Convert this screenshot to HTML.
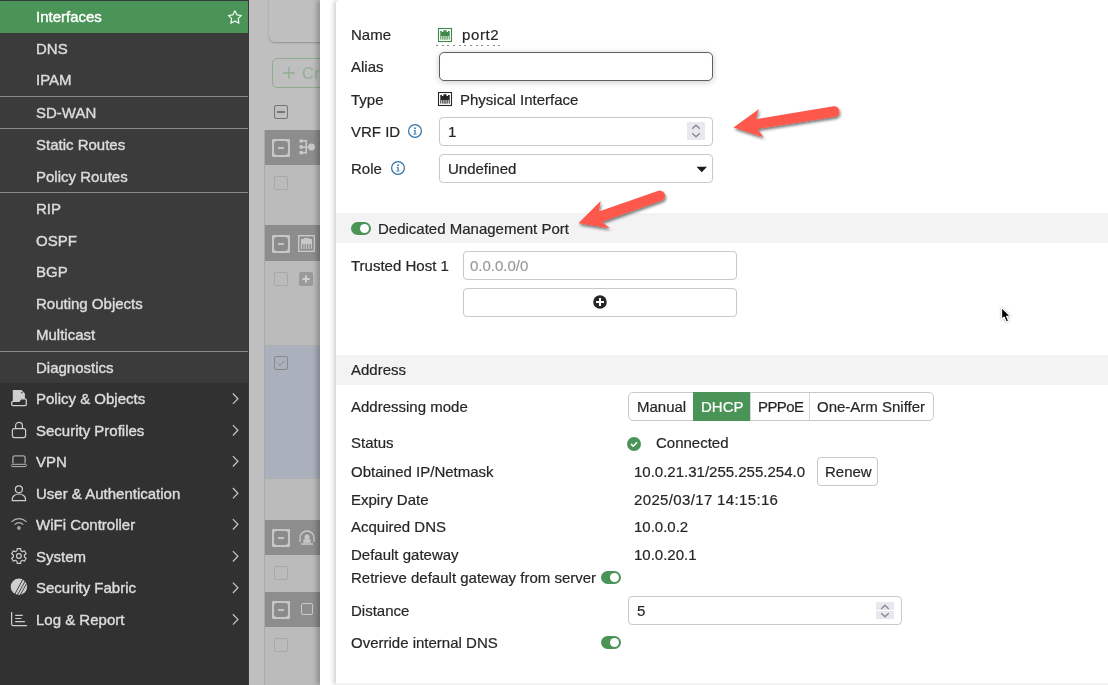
<!DOCTYPE html>
<html><head><meta charset="utf-8">
<style>
*{box-sizing:border-box}
html,body{margin:0;padding:0}
body{width:1108px;height:685px;overflow:hidden;position:relative;background:#bfbfbf;font-family:"Liberation Sans",sans-serif;font-size:15px;color:#262626}
.a{position:absolute}
.t{position:absolute;white-space:nowrap;line-height:16px;will-change:transform;-webkit-text-stroke:0.2px currentColor}
.si,.mi{-webkit-text-stroke:0.4px currentColor}
#sb{left:0;top:0;width:248px;height:685px;background:#313131}
.si{color:#dcdcdc;left:36px}
.sep{position:absolute;left:0;width:248px;height:1px;background:#8a8a8a}
.mi{color:#dcdcdc;left:36px}
.chev{position:absolute;left:229.5px;width:7px;height:7px;border-right:1.3px solid #bbb;border-top:1.3px solid #bbb;transform:rotate(45deg)}
.pl{color:#262626}
.inp{position:absolute;background:#fff;border:1px solid #c8c8c8;border-radius:4px}
.tog{position:absolute;width:20px;height:13px;border-radius:7px;background:#4a9458}
.tog:after{content:"";position:absolute;right:2px;top:2px;width:9px;height:9px;border-radius:50%;background:#fff}
.band{position:absolute;left:336px;width:772px;height:30px;background:#f3f3f3}
</style></head><body>

<!-- sidebar -->
<div id="sb" class="a"></div>
<div class="a" style="left:0;top:1px;width:248px;height:382px;background:#3b3b3b"></div>
<div class="a" style="left:2px;top:0;width:246px;height:1px;background:#383838"></div>
<div class="a" style="left:0;top:1px;width:248px;height:32px;background:#4a9458"></div>
<div class="a" style="left:248px;top:0;width:1px;height:685px;background:#3a3a3a"></div>
<div class="t si" style="top:9px;color:#fff">Interfaces</div>
<svg class="a" style="left:0;top:0" width="248" height="33"><path d="M234.90 10.70 L236.90 14.85 L241.46 15.47 L238.13 18.65 L238.96 23.18 L234.90 21.00 L230.84 23.18 L231.67 18.65 L228.34 15.47 L232.90 14.85 Z" fill="none" stroke="#fff" stroke-width="1.1" stroke-linejoin="round"/></svg>
<div class="t si" style="top:41px">DNS</div>
<div class="t si" style="top:72px">IPAM</div>
<div class="sep" style="top:96px"></div>
<div class="t si" style="top:105px">SD-WAN</div>
<div class="sep" style="top:128px"></div>
<div class="t si" style="top:137px">Static Routes</div>
<div class="t si" style="top:169px">Policy Routes</div>
<div class="sep" style="top:192px"></div>
<div class="t si" style="top:201px">RIP</div>
<div class="t si" style="top:233px">OSPF</div>
<div class="t si" style="top:264px">BGP</div>
<div class="t si" style="top:296px">Routing Objects</div>
<div class="t si" style="top:327px">Multicast</div>
<div class="sep" style="top:351px"></div>
<div class="t si" style="top:360px">Diagnostics</div>

<div class="t mi" style="top:391px">Policy &amp; Objects</div>
<div class="t mi" style="top:423px">Security Profiles</div>
<div class="t mi" style="top:454px">VPN</div>
<div class="t mi" style="top:486px">User &amp; Authentication</div>
<div class="t mi" style="top:517px">WiFi Controller</div>
<div class="t mi" style="top:549px">System</div>
<div class="t mi" style="top:580px">Security Fabric</div>
<div class="t mi" style="top:612px">Log &amp; Report</div>


<svg class="a" style="left:0;top:380px" width="40" height="260" viewBox="0 380 40 260" fill="none" stroke="#cfcfcf" stroke-width="1.2">
 <!-- policy -->
 <path d="M12.8 389.9 H21.5 L24.9 393.5 V398.8 H20.6 L19.1 401.3 H12.8 Z" fill="#cfcfcf" stroke="none"/>
 <circle cx="21.9" cy="392.6" r="0.9" fill="#555" stroke="none"/>
 <path d="M11.7 402.6 Q11.7 401.3 13 401.3 H19.1 L20.6 398.8 H24.9 Q26.3 398.8 26.3 400.3 V404.3 Q26.3 405.6 25 405.6 H13 Q11.7 405.6 11.7 404.3 Z" stroke-width="1.3"/>
 <!-- lock -->
 <path d="M15.6 428.4 V425.8 A3.4 3.4 0 0 1 22.4 425.8 V428.4"/>
 <rect x="12.4" y="428.6" width="13.2" height="9" rx="2"/>
 <!-- laptop -->
 <path d="M12.9 463.4 V457.8 A2 2 0 0 1 14.9 455.8 H23.1 A2 2 0 0 1 25.1 457.8 V463.4" stroke="#a8a8a8" stroke-width="1.3"/>
 <rect x="11.5" y="464.3" width="15" height="2.3" rx="1.15" stroke="#b8b8b8" stroke-width="1"/>
 <!-- user -->
 <circle cx="18.9" cy="489.3" r="3.5"/>
 <path d="M12.3 500.6 V499 A6.6 5 0 0 1 25.5 499 V500.6 Z"/>
 <!-- wifi -->
 <path d="M11.4 521.9 Q18.9 515.3 26.6 521.9" stroke="#b4b4b4"/>
 <path d="M14.6 524.6 Q18.9 520.5 23.3 524.6" stroke="#b4b4b4"/>
 <circle cx="18.9" cy="528" r="1.9" fill="#a0a0a0" stroke="none"/>
 <!-- gear -->
 <path d="M16.98 550.74 L17.19 548.59 L20.61 548.59 L20.82 550.74 L22.50 551.71 L24.46 550.82 L26.17 553.78 L24.41 555.03 L24.41 556.97 L26.17 558.22 L24.46 561.18 L22.50 560.29 L20.82 561.26 L20.61 563.41 L17.19 563.41 L16.98 561.26 L15.30 560.29 L13.34 561.18 L11.63 558.22 L13.39 556.97 L13.39 555.03 L11.63 553.78 L13.34 550.82 L15.30 551.71 Z" stroke-linejoin="round"/>
 <circle cx="18.9" cy="556" r="2.4"/>
 <!-- fabric -->
 <circle cx="18.9" cy="586.7" r="8.2" fill="#cfcfcf" stroke="none"/>
 <path d="M14.4 595 L23 579 M17.2 595.5 L25.2 581 M20 595.5 L26.6 583.5" stroke="#313131" stroke-width="0.9"/>
 <!-- log -->
 <path d="M11.6 612 V624 Q11.6 625.6 13.2 625.6 H27"/>
 <path d="M15.2 615.4 H22.8 M15.2 618.5 H21.4 M15.2 621.6 H24.9"/>
</svg>
<svg class="a" style="left:0;top:0" width="248" height="685"><path d="M232.9 393.5 L237.9 398.7 L232.9 403.9 M232.9 425.1 L237.9 430.3 L232.9 435.5 M232.9 456.1 L237.9 461.3 L232.9 466.5 M232.9 488.0 L237.9 493.2 L232.9 498.4 M232.9 519.1 L237.9 524.3 L232.9 529.5 M232.9 551.1 L237.9 556.3 L232.9 561.5 M232.9 582.6 L237.9 587.8 L232.9 593.0 M232.9 614.2 L237.9 619.4 L232.9 624.6" fill="none" stroke="#c4c4c4" stroke-width="1.25"/></svg>
<!-- background page (overlayed) -->
<div class="a" style="left:269px;top:-6px;width:70px;height:48px;border-radius:6px;background:#bfbfbf;box-shadow:0 1px 2px rgba(0,0,0,.25)"></div>


<!-- background page -->
<div class="a" style="left:272px;top:58px;width:60px;height:30px;border:1.2px solid #8fae8f;border-radius:5px"></div>
<svg class="a" style="left:282px;top:66px" width="14" height="14"><path d="M7 1 V13 M1 7 H13" stroke="#8fae8f" stroke-width="1.3"/></svg>
<div class="t" style="left:302px;top:65px;font-size:16.5px;color:#97b097">Cr</div>
<div class="a" style="left:274px;top:105px;width:14px;height:14px;border:1.3px solid #767676;border-radius:2px"></div>
<div class="a" style="left:277px;top:111px;width:8px;height:2px;background:#767676"></div>
<div class="a" style="left:264px;top:130px;width:60px;height:555px;border-left:1px solid #a9a9a9;background:#bbbbbb"></div>
<div class="a" style="left:265px;top:130px;width:60px;height:35px;background:#8d8d8d"></div>
<div class="a" style="left:265px;top:225px;width:60px;height:36px;background:#8d8d8d"></div>
<div class="a" style="left:265px;top:346px;width:60px;height:132px;background:#aab0bc"></div>
<div class="a" style="left:265px;top:478px;width:60px;height:1px;background:#b0b0b0"></div>
<div class="a" style="left:265px;top:520px;width:60px;height:35px;background:#8d8d8d"></div>
<div class="a" style="left:265px;top:592px;width:60px;height:35px;background:#8d8d8d"></div>
<div class="a" style="left:265px;top:345px;width:60px;height:1px;background:#b0b0b0"></div>
<!-- header minus boxes -->
<div class="a" style="left:272px;top:139px;width:18px;height:18px;border:2px solid #c6c6c6;background:#c6c6c6;border-radius:1px"><div class="a" style="left:0;top:0;width:14px;height:14px;background:#8b8b8b;border-radius:3px"></div></div>
<div class="a" style="left:278px;top:147px;width:6px;height:1.5px;background:#c4c4c4"></div>
<div class="a" style="left:272px;top:235px;width:18px;height:18px;border:2px solid #c6c6c6;background:#c6c6c6;border-radius:1px"><div class="a" style="left:0;top:0;width:14px;height:14px;background:#8b8b8b;border-radius:3px"></div></div>
<div class="a" style="left:278px;top:243px;width:6px;height:1.5px;background:#c4c4c4"></div>
<div class="a" style="left:272px;top:529px;width:18px;height:18px;border:2px solid #c6c6c6;background:#c6c6c6;border-radius:1px"><div class="a" style="left:0;top:0;width:14px;height:14px;background:#8b8b8b;border-radius:3px"></div></div>
<div class="a" style="left:278px;top:537px;width:6px;height:1.5px;background:#c4c4c4"></div>
<div class="a" style="left:272px;top:601px;width:18px;height:18px;border:2px solid #c6c6c6;background:#c6c6c6;border-radius:1px"><div class="a" style="left:0;top:0;width:14px;height:14px;background:#8b8b8b;border-radius:3px"></div></div>
<div class="a" style="left:278px;top:609px;width:6px;height:1.5px;background:#c4c4c4"></div>
<!-- header icons -->
<svg class="a" style="left:294px;top:134px" width="26" height="28"><g fill="#c8c8c8"><circle cx="7.2" cy="6.9" r="1.9"/><circle cx="7.2" cy="13" r="1.9"/><circle cx="7.2" cy="18.7" r="1.9"/><rect x="7" y="6" width="6" height="1.6"/><rect x="7" y="12.2" width="10" height="1.6"/><rect x="7" y="17.9" width="6" height="1.6"/><rect x="11.4" y="6" width="1.6" height="13.5"/><circle cx="17.6" cy="13" r="3.4"/></g></svg>
<svg class="a" style="left:298px;top:235px" width="17" height="17"><rect x="0.7" y="0.7" width="15.6" height="15.6" fill="none" stroke="#c8c8c8" stroke-width="1.4"/><path d="M3 4 H6 V3 H11 V4 H14 V9 H3 Z" fill="#c8c8c8"/><path d="M3.5 9 V14 M6 9 V14 M8.5 9 V14 M11 9 V14 M13.5 9 V14" stroke="#c8c8c8" stroke-width="1.2"/></svg>
<svg class="a" style="left:298px;top:529px" width="18" height="17"><path d="M2 13 V9 A7 7 0 0 1 16 9 V13" fill="none" stroke="#c8c8c8" stroke-width="1.4"/><circle cx="9" cy="8" r="2.5" fill="#c8c8c8"/><path d="M6 11 H12 V13 H6 Z M3 15 H15" fill="#c8c8c8" stroke="#c8c8c8" stroke-width="1.3"/></svg>
<div class="a" style="left:301px;top:603px;width:12px;height:12px;border:1.3px solid #c8c8c8;border-radius:2px"></div>
<!-- row checkboxes -->
<div class="a" style="left:274px;top:176px;width:14px;height:14px;border:1px solid #a8a8a8;border-radius:2px"></div>
<div class="a" style="left:274px;top:272px;width:14px;height:14px;border:1px solid #a8a8a8;border-radius:2px"></div>
<div class="a" style="left:299px;top:272px;width:14px;height:14px;background:#9a9a9a;border-radius:2px"></div>
<svg class="a" style="left:299px;top:272px" width="14" height="14"><path d="M7 3.5 V10.5 M3.5 7 H10.5" stroke="#cfcfcf" stroke-width="2"/></svg>
<div class="a" style="left:274px;top:356px;width:14px;height:14px;border:1px solid #888;border-radius:2px"></div>
<svg class="a" style="left:274px;top:356px" width="14" height="14"><path d="M3.5 7.2 L6 9.5 L10.5 4.8" fill="none" stroke="#888" stroke-width="1"/></svg>
<div class="a" style="left:274px;top:566px;width:14px;height:14px;border:1px solid #a8a8a8;border-radius:2px"></div>
<div class="a" style="left:274px;top:638px;width:14px;height:14px;border:1px solid #a8a8a8;border-radius:2px"></div>
<!-- panel -->
<div class="a" style="left:320px;top:0;width:788px;height:685px;background:#fff;box-shadow:-3px 0 5px rgba(0,0,0,.25)"></div>
<div class="a" style="left:336px;top:0;width:772px;height:685px;background:#fff;border-top-left-radius:4px;box-shadow:-2px 0 5px rgba(0,0,0,.2)"></div>


<div class="t pl" style="left:351px;top:27px">Name</div>
<div class="t pl" style="left:462px;top:27px;letter-spacing:0.6px">port2</div>
<div class="t pl" style="left:351px;top:59px">Alias</div>
<div class="inp" style="left:439px;top:52px;width:274px;height:29px;border:1.2px solid #606060;border-radius:5px;box-shadow:0 1px 6px rgba(0,0,0,.22)"></div>
<div class="t pl" style="left:351px;top:92px">Type</div>
<div class="t pl" style="left:460px;top:92px">Physical Interface</div>
<div class="t pl" style="left:351px;top:124px">VRF ID</div>
<div class="inp" style="left:439px;top:117px;width:274px;height:29px"></div>
<div class="t pl" style="left:448px;top:124px">1</div>
<div class="t pl" style="left:351px;top:161px">Role</div>
<div class="inp" style="left:439px;top:154px;width:274px;height:29px"></div>
<div class="t pl" style="left:448px;top:161px">Undefined</div>

<div class="band" style="top:213px"></div>
<div class="tog" style="left:351px;top:222px"></div>
<div class="t pl" style="left:378px;top:221px">Dedicated Management Port</div>
<div class="t pl" style="left:351px;top:258px">Trusted Host 1</div>
<div class="inp" style="left:463px;top:251px;width:274px;height:29px"></div>
<div class="t" style="left:470px;top:258px;color:#999">0.0.0.0/0</div>
<div class="inp" style="left:463px;top:288px;width:274px;height:29px"></div>

<div class="band" style="top:355px"></div>
<div class="t pl" style="left:351px;top:362px">Address</div>
<div class="t pl" style="left:351px;top:399px">Addressing mode</div>
<div class="t pl" style="left:351px;top:435px">Status</div>
<div class="t pl" style="left:656px;top:435px">Connected</div>
<div class="t pl" style="left:351px;top:464px">Obtained IP/Netmask</div>
<div class="t pl" style="left:634px;top:464px">10.0.21.31/255.255.254.0</div>
<div class="t pl" style="left:351px;top:492px">Expiry Date</div>
<div class="t pl" style="left:634px;top:492px;letter-spacing:0.35px">2025/03/17 14:15:16</div>
<div class="t pl" style="left:351px;top:519px">Acquired DNS</div>
<div class="t pl" style="left:634px;top:519px">10.0.0.2</div>
<div class="t pl" style="left:351px;top:547px">Default gateway</div>
<div class="t pl" style="left:634px;top:547px">10.0.20.1</div>
<div class="t pl" style="left:351px;top:570px">Retrieve default gateway from server</div>
<div class="tog" style="left:601px;top:571px"></div>
<div class="t pl" style="left:351px;top:603px">Distance</div>
<div class="inp" style="left:628px;top:596px;width:274px;height:29px"></div>
<div class="t pl" style="left:637px;top:603px">5</div>
<div class="t pl" style="left:351px;top:635px">Override internal DNS</div>
<div class="tog" style="left:601px;top:636px"></div>

<!-- panel icons -->
<svg class="a" style="left:437px;top:27px" width="16" height="16"><rect x="1.5" y="1.5" width="13" height="13" fill="#fff" stroke="#3f8a4b" stroke-width="1.1"/><path d="M3.3 4 H5 V5 H6.4 V3.3 H9.6 V5 H11 V4 H12.7 V9 H3.3 Z" fill="#3f8a4b"/><path d="M3.8 9 V12.6 M5.8 9 V12.6 M7.3 9 V12.6 M8.7 9 V12.6 M10.2 9 V12.6 M12.2 9 V12.6" stroke="#3f8a4b" stroke-width="1"/><path d="M7.3 9 V12.6 M8.7 9 V12.6" stroke="#9cc3a3" stroke-width="1"/></svg>
<svg class="a" style="left:436px;top:45px" width="66" height="1" shape-rendering="crispEdges"><g fill="#8a8a8a"><rect x="0" y="0" width="2" height="1"/><rect x="6" y="0" width="2" height="1"/><rect x="11" y="0" width="2" height="1"/><rect x="17" y="0" width="2" height="1"/><rect x="23" y="0" width="2" height="1"/><rect x="28" y="0" width="2" height="1"/><rect x="34" y="0" width="2" height="1"/><rect x="40" y="0" width="2" height="1"/><rect x="45" y="0" width="2" height="1"/><rect x="51" y="0" width="2" height="1"/><rect x="57" y="0" width="2" height="1"/><rect x="62" y="0" width="2" height="1"/></g></svg>
<svg class="a" style="left:437px;top:91px" width="16" height="16"><rect x="1.5" y="1.5" width="13" height="13" fill="#fff" stroke="#262626" stroke-width="1.1"/><path d="M3.3 4 H5 V5 H6.4 V3.3 H9.6 V5 H11 V4 H12.7 V9 H3.3 Z" fill="#262626"/><path d="M3.8 9 V12.6 M5.8 9 V12.6 M7.3 9 V12.6 M8.7 9 V12.6 M10.2 9 V12.6 M12.2 9 V12.6" stroke="#262626" stroke-width="1"/><path d="M7.3 9 V12.6 M8.7 9 V12.6" stroke="#888" stroke-width="1"/></svg>
<svg class="a" style="left:407px;top:123px" width="16" height="16"><circle cx="8" cy="8" r="6.4" fill="none" stroke="#3070a8" stroke-width="1.2"/><circle cx="8" cy="5.2" r="0.9" fill="#3070a8"/><path d="M6.8 7 H8.6 V10.8 H9.6 V11.6 H6.4 V10.8 H7.4 V7.8 H6.8 Z" fill="#3070a8"/></svg>
<svg class="a" style="left:390px;top:160px" width="16" height="16"><circle cx="8" cy="8" r="6.4" fill="none" stroke="#3070a8" stroke-width="1.2"/><circle cx="8" cy="5.2" r="0.9" fill="#3070a8"/><path d="M6.8 7 H8.6 V10.8 H9.6 V11.6 H6.4 V10.8 H7.4 V7.8 H6.8 Z" fill="#3070a8"/></svg>
<div class="a" style="left:687px;top:122px;width:18px;height:18px;background:#e8e8ee"></div>
<svg class="a" style="left:687px;top:122px" width="18" height="18"><path d="M5.2 6.8 L9 3.2 L12.8 6.8 M5.2 11.3 L9 14.8 L12.8 11.3" fill="none" stroke="#8a8a96" stroke-width="1.4"/></svg>
<svg class="a" style="left:696px;top:165.6px" width="12" height="7"><path d="M0.5 0.8 H11 L5.75 6.3 Z" fill="#1a1a1a"/></svg>
<svg class="a" style="left:592px;top:294px" width="16" height="16"><circle cx="8" cy="8" r="6.8" fill="#262626"/><path d="M4 8 H12 M8 4 V12" stroke="#fff" stroke-width="2"/></svg>
<!-- button group -->
<div class="a" style="left:628px;top:392px;width:306px;height:29px;border:1px solid #c8c8c8;border-radius:5px;background:#fff;overflow:hidden">
 <div class="a" style="left:121px;top:0;width:1px;height:27px;background:#d6d6d6"></div>
 <div class="a" style="left:180px;top:0;width:1px;height:27px;background:#d6d6d6"></div>
</div>
<div class="a" style="left:693px;top:392px;width:57px;height:29px;background:#4a9458"></div>
<div class="t pl" style="left:637px;top:399px">Manual</div>
<div class="t" style="left:701px;top:399px;color:#fff">DHCP</div>
<div class="t pl" style="left:758px;top:399px;letter-spacing:-0.6px">PPPoE</div>
<div class="t pl" style="left:817px;top:399px">One-Arm Sniffer</div>
<svg class="a" style="left:626px;top:436px" width="16" height="16"><circle cx="8" cy="8" r="7" fill="#4a9458"/><path d="M5 8.2 L7.2 10.2 L11 6.3" fill="none" stroke="#fff" stroke-width="1.6"/></svg>
<div class="a" style="left:817px;top:457px;width:61px;height:29px;border:1px solid #c8c8c8;border-radius:4px;background:#fff"></div>
<div class="t pl" style="left:825px;top:464px">Renew</div>
<div class="a" style="left:876px;top:602px;width:18px;height:8px;background:#e8e8ee"></div><div class="a" style="left:876px;top:611px;width:18px;height:8px;background:#e8e8ee"></div>
<svg class="a" style="left:876px;top:602px" width="18" height="17"><path d="M5.2 6.9 L9 3.3 L12.8 6.9 M5.2 11.2 L9 14.8 L12.8 11.2" fill="none" stroke="#8a8a96" stroke-width="1.4"/></svg>
<div class="a" style="left:336px;top:683px;width:772px;height:2px;background:#f3f3f3"></div>
<!-- arrows -->
<svg class="a" style="left:700px;top:90px;overflow:visible" width="160" height="160">
 <defs><filter id="sh" x="-20%" y="-40%" width="140%" height="180%"><feGaussianBlur in="SourceAlpha" stdDeviation="1.6"/><feOffset dx="1.2" dy="2" result="b"/><feComponentTransfer><feFuncA type="linear" slope="0.55"/></feComponentTransfer><feMerge><feMergeNode/><feMergeNode in="SourceGraphic"/></feMerge></filter></defs>
</svg>
<svg class="a" style="left:0;top:0;overflow:visible" width="1108" height="685">
 <g filter="url(#sh)" fill="#fd584c">
  <path d="M733.5 127.6 L759.1 109.1 L755.6 119.2 L833.5 106.2 A5.4 5.4 0 0 1 835.3 116.8 L757.3 129.1 L763.6 137.2 Z"/>
  <path d="M578.4 223.2 L600.7 200.9 L598.9 211.4 L657.8 190.9 A5.2 5.2 0 0 1 661.8 200.6 L601.8 221.8 L609.7 228.2 Z"/>
 </g>
 <!-- cursor -->
 <path d="M1001.6 307.6 L1001.6 319.4 L1004.2 317 L1006.2 322 L1008.6 321 L1006.6 316.2 L1010.2 316.2 Z" fill="#000" stroke="#fff" stroke-width="1.1" stroke-linejoin="round" style="filter:drop-shadow(0 0 1.2px rgba(0,0,0,.35))"/>
</svg>

</body></html>
